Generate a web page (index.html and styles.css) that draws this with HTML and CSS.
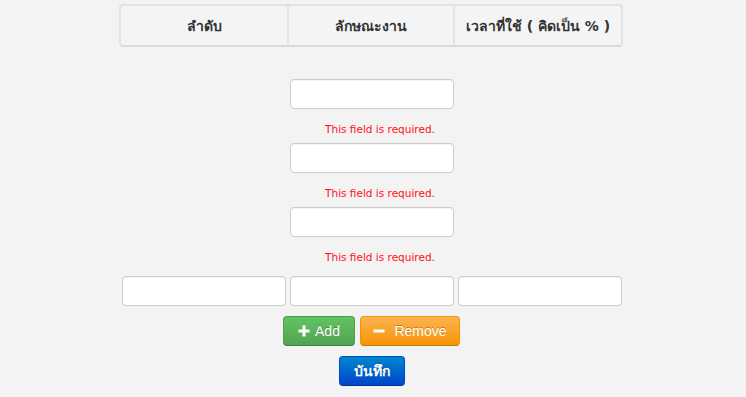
FILE: index.html
```html
<!DOCTYPE html>
<html lang="th">
<head>
<meta charset="utf-8">
<title>Form</title>
<link rel="stylesheet" href="styles.css">
</head>
<body>
<div class="page">
  <div class="head-table">
    <div class="head-cell">ลำดับ</div>
    <div class="head-cell">ลักษณะงาน</div>
    <div class="head-cell">เวลาที่ใช้ ( คิดเป็น % )</div>
  </div>
  <div class="form">
    <input class="field" type="text">
    <div class="error">This field is required.</div>
    <input class="field" type="text">
    <div class="error">This field is required.</div>
    <input class="field" type="text">
    <div class="error">This field is required.</div>
    <div class="row">
      <input class="field" type="text">
      <input class="field" type="text">
      <input class="field" type="text">
    </div>
    <div class="actions">
      <button class="btn btn-add" type="button"><svg class="ico" viewBox="0 0 12 12" width="12" height="12"><rect x="4.5" y="0.5" width="3" height="11" fill="#fff"/><rect x="0.5" y="4.5" width="11" height="3" fill="#fff"/></svg>Add</button>
      <button class="btn btn-remove" type="button"><svg class="ico" viewBox="0 0 12 12" width="12" height="12"><rect x="0.5" y="4.5" width="11" height="3" fill="#fff"/></svg>Remove</button>
    </div>
    <button class="btn btn-save" type="submit">บันทึก</button>
  </div>
</div>
</body>
</html>
```

FILE: styles.css
```css
html, body {
  margin: 0;
  padding: 0;
  background: #f3f3f3;
}
body {
  font-family: Tahoma, "DejaVu Sans", "Noto Sans", sans-serif;
  width: 746px;
  height: 397px;
  overflow: hidden;
}
.page {
  padding-top: 4px;
}
.head-table {
  margin-left: 119px;
  width: 504px;
  height: 43px;
  box-sizing: border-box;
  display: grid;
  grid-template-columns: 166px 166px 1fr;
  border: 2px solid #e2e2e2;
  border-bottom-color: #dadada;
  border-radius: 4px;
  background: #f4f4f4;
}
.head-cell {
  display: flex;
  align-items: center;
  justify-content: center;
  font-size: 14px;
  font-weight: bold;
  color: #333;
  border-left: 2px solid #e4e4e4;
}
.head-cell:first-child {
  border-left: none;
}
.form {
  display: flex;
  flex-direction: column;
  align-items: center;
  margin-top: 32px;
  width: 744px;
}
.field {
  box-sizing: border-box;
  width: 164px;
  height: 30px;
  margin: 0;
  border: 1px solid #cccccc;
  border-radius: 4px;
  background: #fff;
  box-shadow: inset 0 1px 1px rgba(0,0,0,0.05);
}
.error {
  margin: 13px 0 7px 16px;
  height: 14px;
  line-height: 14px;
  font-family: "DejaVu Sans", sans-serif;
  font-size: 10.5px;
  color: #ff1020;
}
.form > .error:nth-of-type(3) {
  margin-bottom: 12px;
}
.row {
  display: flex;
  gap: 4px;
}
.actions {
  display: flex;
  gap: 5px;
  margin-top: 10px;
  margin-left: -1px;
}
.btn {
  display: inline-flex;
  align-items: center;
  justify-content: center;
  box-sizing: border-box;
  height: 30px;
  padding: 0;
  border-radius: 4px;
  color: #fff;
  font-family: "Liberation Sans", Arial, sans-serif;
  font-size: 14px;
  text-shadow: 0 -1px 0 rgba(0,0,0,0.25);
  cursor: pointer;
}
.ico {
  margin-right: 5px;
}
.btn-add {
  width: 72px;
  background: linear-gradient(#62c462, #51a351);
  border: 1px solid #4e9e4e;
  border-bottom-color: #3f7f3f;
}
.btn-remove {
  width: 100px;
  background: linear-gradient(#fbb450, #f89406);
  border: 1px solid #f0940e;
  border-bottom-color: #c87604;
}
.btn-remove .ico {
  margin-right: 9px;
}
.btn-save {
  width: 66px;
  margin-top: 10px;
  background: linear-gradient(#0088cc, #0044cc);
  border: 1px solid #0046c8;
  border-bottom-color: #00309a;
  font-family: Tahoma, "DejaVu Sans", "Noto Sans", sans-serif;
  font-weight: bold;
  font-size: 14px;
}
```
